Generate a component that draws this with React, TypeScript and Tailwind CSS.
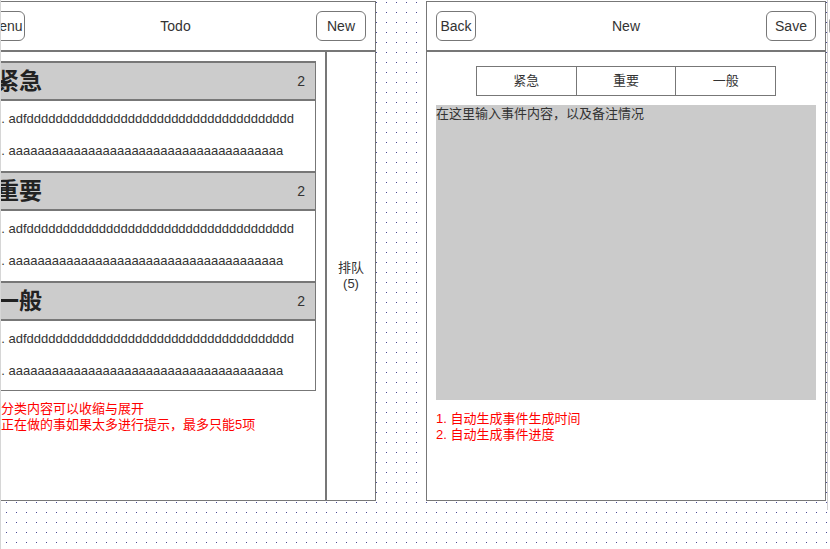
import React from "react";

const groups = [
  { title: "紧急", count: 2 },
  { title: "重要", count: 2 },
  { title: "一般", count: 2 },
];

const lineD = "adf" + "d".repeat(37);
const lineA = "a".repeat(38);

const Btn = ({ label, w }: { label: string; w: string }) => (
  <div
    className={`${w} h-[30px] rounded-[6px] border border-[#777] bg-white flex items-center justify-center text-[14px] text-[#333] overflow-hidden whitespace-nowrap`}
  >
    {label}
  </div>
);

const TodoPanel = () => {
  return (
    <div className="w-[401px] h-[500px] shrink-0 -ml-[25px] bg-white border border-[#777] flex flex-col">
      {/* header */}
      <div className="h-[50px] shrink-0 border-b-2 border-[#777] px-[9px] grid grid-cols-[1fr_auto_1fr] items-center">
        <div className="justify-self-start">
          <Btn label="Menu" w="w-[40px]" />
        </div>
        <p className="text-[14px] text-[#333]">Todo</p>
        <div className="justify-self-end">
          <Btn label="New" w="w-[50px]" />
        </div>
      </div>

      <div className="flex flex-1 min-h-0">
        <div className="w-[349px] shrink-0 pl-[9px] pt-[9px]">
          <div className="w-[331px] border-r border-b border-[#777]">
            {groups.map((g, i) => (
              <div key={g.title}>
                <div className="h-[40px] border-y-2 border-[#777] bg-[#cccccc] flex items-center justify-between pl-[11px] pr-[10px]">
                  <h1 className="text-[23px] font-bold leading-none text-[#222]">{g.title}</h1>
                  <span className="text-[14px] text-[#333]">{g.count}</span>
                </div>
                <div className={`${i === groups.length - 1 ? "h-[69px]" : "h-[70px]"} pt-[2px] pl-[9px] text-[13px] text-[#333]`}>
                  <p className="h-[32px] flex items-center whitespace-nowrap">1. {lineD}</p>
                  <p className="h-[32px] flex items-center whitespace-nowrap">2. {lineA}</p>
                </div>
              </div>
            ))}
          </div>
          <div className="mt-[10px] pl-[16px] text-[13px] leading-[16px] text-[#ff0000] whitespace-nowrap">
            <p>分类内容可以收缩与展开</p>
            <p>正在做的事如果太多进行提示，最多只能5项</p>
          </div>
        </div>

        <div className="flex-1 border-l-2 border-[#777] flex items-center justify-center text-center text-[13px] leading-[16px] text-[#333]">
          <p>
            排队
            <br />
            (5)
          </p>
        </div>
      </div>
    </div>
  );
};

const NewPanel = () => {
  return (
    <div className="w-[400px] h-[500px] shrink-0 bg-white border border-[#777] flex flex-col">
      <div className="h-[50px] shrink-0 border-b-2 border-[#777] px-[9px] grid grid-cols-[1fr_auto_1fr] items-center">
        <div className="justify-self-start">
          <Btn label="Back" w="w-[40px]" />
        </div>
        <p className="text-[14px] text-[#333]">New</p>
        <div className="justify-self-end">
          <Btn label="Save" w="w-[50px]" />
        </div>
      </div>

      <div className="px-[9px] pt-[14px]">
        <div className="mx-auto w-[300px] h-[30px] flex border border-[#777] text-[13px] text-[#333]">
          <div className="flex-1 flex items-center justify-center">紧急</div>
          <div className="flex-1 flex items-center justify-center border-l border-[#777]">重要</div>
          <div className="flex-1 flex items-center justify-center border-l border-[#777]">一般</div>
        </div>

        <div className="mt-[9px] h-[295px] bg-[#cbcbcb] text-[13px] leading-[18px] text-[#333]">
          在这里输入事件内容，以及备注情况
        </div>

        <div className="mt-[11px] text-[13px] leading-[16px] text-[#ff0000]">
          <p>1. 自动生成事件生成时间</p>
          <p>2. 自动生成事件进度</p>
        </div>
      </div>
    </div>
  );
};

export default function App() {
  return (
    <div className="relative w-[830px] h-[549px] overflow-hidden bg-white bg-[radial-gradient(circle_at_0.5px_0.5px,#4a4a96_0.7px,transparent_0.9px)] bg-size-[10px_10px] bg-position-[6px_2px] font-['Liberation_Sans','Noto_Sans_CJK_SC',sans-serif]">
      <div className="flex items-start gap-[50px] pt-[1px]">
        <TodoPanel />
        <NewPanel />
      </div>
      {/* edge of the next panel */}
      <div className="absolute left-[827px] top-0 h-[510px] w-[3px] border-l border-[#cfcfcf] bg-white">
        <div className="mt-[18px] ml-[1px] h-[16px] w-[4px] rounded-l-[3px] border border-[#999]" />
      </div>
      <div className="absolute left-0 top-0 h-full w-px bg-[#d6d6d6]" />
    </div>
  );
}
